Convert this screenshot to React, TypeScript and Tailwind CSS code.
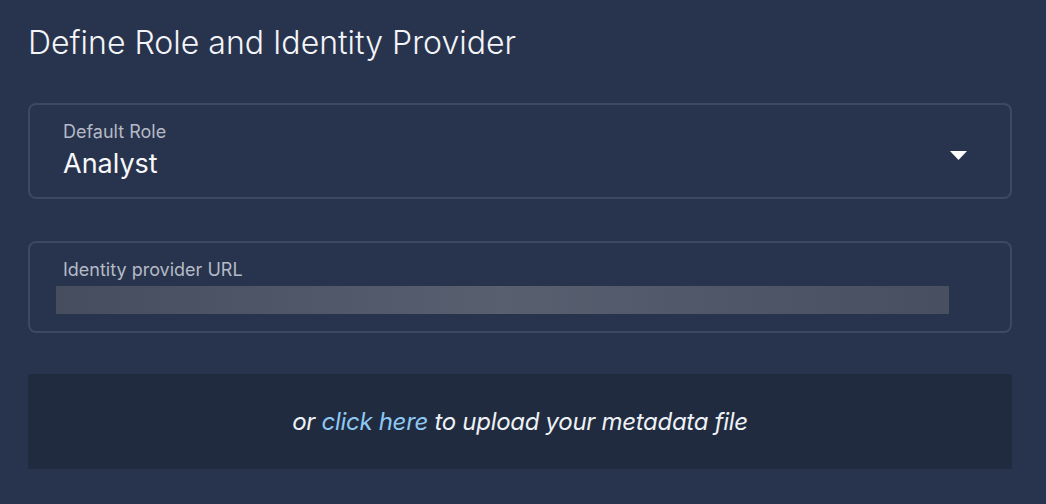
import React from 'react';

const App: React.FC = () => {
  return (
    <div
      className="w-[1046px] h-[504px] bg-[#28344d] text-white overflow-hidden"
      style={{ fontFamily: 'Inter, "Noto Sans", sans-serif' }}
    >
      <div className="pl-[28px] pr-[34px] pt-[23px]">
        <h1 className="text-[32px] leading-[40px] font-light text-[#f3f5f8]">
          Define Role and Identity Provider
        </h1>

        {/* Default role select */}
        <div className="mt-[40px] h-[96px] rounded-[8px] border-2 border-[#3c4864] flex items-start pl-[33px] pr-[43px] pt-[15px]">
          <div className="flex-1">
            <div className="text-[18px] leading-[24px] text-[#b4bac6]">Default Role</div>
            <div className="text-[27px] leading-[32px] mt-[4px] text-[#f7f8fa]">Analyst</div>
          </div>
          <svg width="17" height="9" viewBox="0 0 17 9" className="mt-[31px]">
            <path d="M0 0h17l-8.5 9z" fill="#ffffff" />
          </svg>
        </div>

        {/* Identity provider URL */}
        <div className="mt-[42px] h-[92px] rounded-[8px] border-2 border-[#3c4864] pl-[26px] pr-[61px] pt-[15px]">
          <div className="pl-[7px] text-[18px] leading-[24px] text-[#b4bac6]">Identity provider URL</div>
          <div className="mt-[4px] h-[28px] bg-gradient-to-r from-[#454d5f] via-[#585f6f] to-[#474f60] blur-[0.6px]" />
        </div>

        {/* Upload area */}
        <div className="mt-[41px] h-[95px] bg-[#202b40] flex items-center justify-center">
          <p className="italic text-[24px] leading-[32px] tracking-[-0.3px] text-[#eef1f5]">
            or <span className="text-[#8ec8f2] cursor-pointer">click here</span> to upload your metadata file
          </p>
        </div>
      </div>
    </div>
  );
};

export default App;
